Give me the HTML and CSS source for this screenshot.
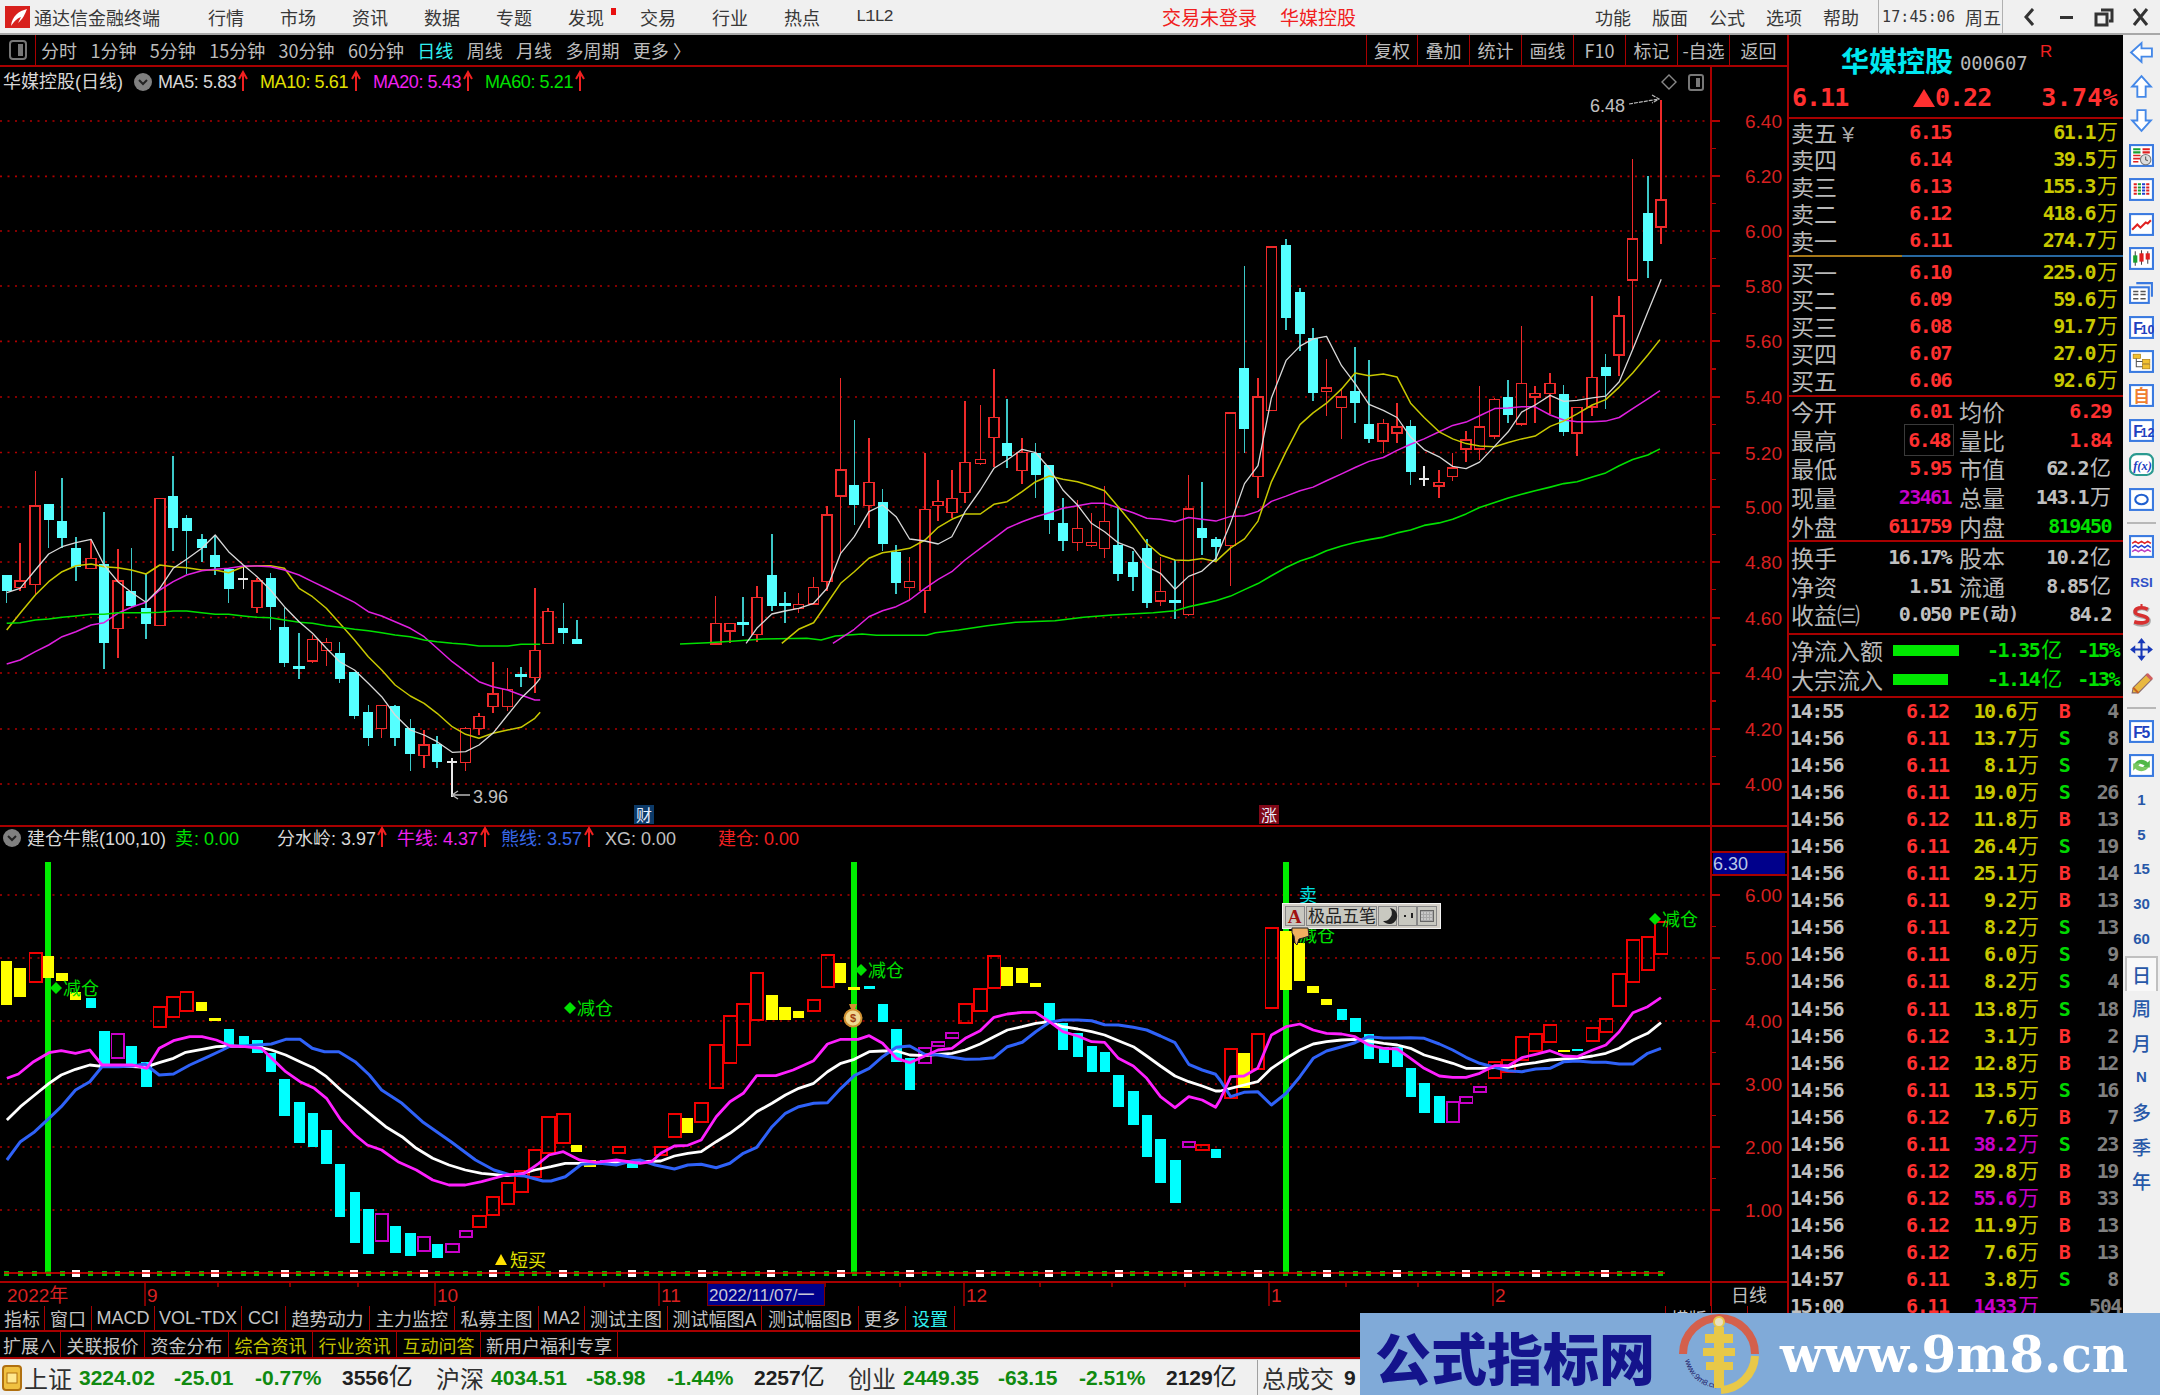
FILE: index.html
```html
<!DOCTYPE html>
<html lang="zh-CN">
<head>
<meta charset="utf-8">
<title>通达信金融终端</title>
<link rel="stylesheet" href="styles.css">
</head>
<body>
<div class="app">
  <header class="titlebar">
    <svg class="logo" viewBox="0 0 25 22"><rect width="25" height="22" fill="#d8201c"/><path d="M22 3C14 5 7 10 6 20 10 14 13 12 16 11L13 17C18 13 20 8 22 3Z" fill="#fff"/></svg>
    <span class="appname">通达信金融终端</span>
    <nav class="menu">
      <span>行情</span><span>市场</span><span>资讯</span><span>数据</span><span>专题</span><span class="dotted">发现</span><span>交易</span><span>行业</span><span>热点</span><span class="l12">L1L2</span>
    </nav>
    <span class="tb-red first">交易未登录</span>
    <span class="tb-red second">华媒控股</span>
    <nav class="menu right">
      <span>功能</span><span>版面</span><span>公式</span><span>选项</span><span>帮助</span>
    </nav>
    <div class="clock"><span class="time">17:45:06</span><span>周五</span></div>
    <div class="winbtns">
      <svg viewBox="0 0 37 30"><path d="M22 7 15 15l7 8" fill="none" stroke="#333" stroke-width="3"/></svg>
      <svg viewBox="0 0 37 30"><rect x="12" y="14" width="13" height="3" fill="#333"/></svg>
      <svg viewBox="0 0 37 30"><path d="M16 8h11v11h-3M11 12h11v11H11z" fill="none" stroke="#333" stroke-width="3"/></svg>
      <svg viewBox="0 0 37 30"><path d="M12 7l13 16M25 7 12 23" fill="none" stroke="#333" stroke-width="3"/></svg>
    </div>
  </header>

  <div class="body">
    <main class="left">
      <div class="periods">
        <div class="pbtn"><svg viewBox="0 0 18 20"><rect x="1" y="1" width="16" height="18" rx="3" fill="none" stroke="#777" stroke-width="2"/><rect x="9" y="4" width="5" height="12" fill="#777"/></svg></div>
        <div class="plist">
          <span>分时</span><span>1分钟</span><span>5分钟</span><span>15分钟</span><span>30分钟</span><span>60分钟</span><span class="on">日线</span><span>周线</span><span>月线</span><span>多周期</span><span>更多 〉</span>
        </div>
        <div class="pright">
          <span>复权</span><span>叠加</span><span>统计</span><span>画线</span><span>F10</span><span>标记</span><span>-自选</span><span>返回</span>
        </div>
      </div>
      <div class="chart"><svg id="chart" viewBox="0 67 1787 1239" width="1787" height="1239"></svg></div>
      <div class="tabs row1">
        <span>指标</span><span>窗口</span><span>MACD</span><span>VOL-TDX</span><span>CCI</span><span>趋势动力</span><span>主力监控</span><span>私募主图</span><span>MA2</span><span>测试主图</span><span>测试幅图A</span><span>测试幅图B</span><span>更多</span><span class="cy">设置</span>
        <span class="pushed">横版</span><span class="n1"></span>
      </div>
      <div class="tabs row2">
        <span>扩展∧</span><span>关联报价</span><span>资金分布</span><span class="ol">综合资讯</span><span class="ol">行业资讯</span><span class="ol">互动问答</span><span>新用户福利专享</span>
      </div>
    </main>

    <aside class="quote">
      <div class="q-title"><span class="q-name">华媒控股</span><span class="q-code">000607</span><span class="q-r">R</span></div>
      <div class="q-price"><span class="p1">6.11</span><span class="p2"><i class="tri"></i>0.22</span><span class="p3">3.74%</span></div>

      <div class="grid depth">
        <span class="lb">卖五<em class="yen">¥</em></span><span class="red n">6.15</span><span class="vol n span2">61.1<u>万</u></span>
        <span class="lb">卖四</span><span class="red n">6.14</span><span class="vol n span2">39.5<u>万</u></span>
        <span class="lb">卖三</span><span class="red n">6.13</span><span class="vol n span2">155.3<u>万</u></span>
        <span class="lb">卖二</span><span class="red n">6.12</span><span class="vol n span2">418.6<u>万</u></span>
        <span class="lb">卖一</span><span class="red n">6.11</span><span class="vol n span2">274.7<u>万</u></span>
      </div>
      <div class="midline"></div>
      <div class="grid depth buy">
        <span class="lb">买一</span><span class="red n">6.10</span><span class="vol n span2">225.0<u>万</u></span>
        <span class="lb">买二</span><span class="red n">6.09</span><span class="vol n span2">59.6<u>万</u></span>
        <span class="lb">买三</span><span class="red n">6.08</span><span class="vol n span2">91.7<u>万</u></span>
        <span class="lb">买四</span><span class="red n">6.07</span><span class="vol n span2">27.0<u>万</u></span>
        <span class="lb">买五</span><span class="red n">6.06</span><span class="vol n span2">92.6<u>万</u></span>
      </div>
      <div class="grid stats">
        <span class="lb">今开</span><span class="red n">6.01</span><span class="lb">均价</span><span class="red n">6.29</span>
        <span class="lb">最高</span><span class="red n"><b class="hi">6.48</b></span><span class="lb">量比</span><span class="red n">1.84</span>
        <span class="lb">最低</span><span class="red n">5.95</span><span class="lb">市值</span><span class="gr n">62.2<u>亿</u></span>
        <span class="lb">现量</span><span class="mg n">23461</span><span class="lb">总量</span><span class="gr n">143.1<u>万</u></span>
        <span class="lb">外盘</span><span class="red n">611759</span><span class="lb">内盘</span><span class="gn n">819450</span>
      </div>
      <div class="grid stats second">
        <span class="lb">换手</span><span class="gr n">16.17%</span><span class="lb">股本</span><span class="gr n">10.2<u>亿</u></span>
        <span class="lb">净资</span><span class="gr n">1.51</span><span class="lb">流通</span><span class="gr n">8.85<u>亿</u></span>
        <span class="lb">收益㈢</span><span class="gr n">0.050</span><span class="lb pe">PE(动)</span><span class="gr n">84.2</span>
      </div>
      <div class="flow">
        <span class="lb">净流入额</span><span class="barcell"><i class="bar b1"></i></span><span class="gn n">-1.35<u>亿</u></span><span class="gn n">-15%</span>
        <span class="lb">大宗流入</span><span class="barcell"><i class="bar b2"></i></span><span class="gn n">-1.14<u>亿</u></span><span class="gn n">-13%</span>
      </div>
      <div class="ticks" id="ticks">
        <span class="gr">14:55</span><span class="red">6.12</span><span class="vol">10.6<u>万</u></span><span class="b">B</span><span class="c">4</span>
        <span class="gr">14:56</span><span class="red">6.11</span><span class="vol">13.7<u>万</u></span><span class="s">S</span><span class="c">8</span>
        <span class="gr">14:56</span><span class="red">6.11</span><span class="vol">8.1<u>万</u></span><span class="s">S</span><span class="c">7</span>
        <span class="gr">14:56</span><span class="red">6.11</span><span class="vol">19.0<u>万</u></span><span class="s">S</span><span class="c">26</span>
        <span class="gr">14:56</span><span class="red">6.12</span><span class="vol">11.8<u>万</u></span><span class="b">B</span><span class="c">13</span>
        <span class="gr">14:56</span><span class="red">6.11</span><span class="vol">26.4<u>万</u></span><span class="s">S</span><span class="c">19</span>
        <span class="gr">14:56</span><span class="red">6.11</span><span class="vol">25.1<u>万</u></span><span class="b">B</span><span class="c">14</span>
        <span class="gr">14:56</span><span class="red">6.11</span><span class="vol">9.2<u>万</u></span><span class="b">B</span><span class="c">13</span>
        <span class="gr">14:56</span><span class="red">6.11</span><span class="vol">8.2<u>万</u></span><span class="s">S</span><span class="c">13</span>
        <span class="gr">14:56</span><span class="red">6.11</span><span class="vol">6.0<u>万</u></span><span class="s">S</span><span class="c">9</span>
        <span class="gr">14:56</span><span class="red">6.11</span><span class="vol">8.2<u>万</u></span><span class="s">S</span><span class="c">4</span>
        <span class="gr">14:56</span><span class="red">6.11</span><span class="vol">13.8<u>万</u></span><span class="s">S</span><span class="c">18</span>
        <span class="gr">14:56</span><span class="red">6.12</span><span class="vol">3.1<u>万</u></span><span class="b">B</span><span class="c">2</span>
        <span class="gr">14:56</span><span class="red">6.12</span><span class="vol">12.8<u>万</u></span><span class="b">B</span><span class="c">12</span>
        <span class="gr">14:56</span><span class="red">6.11</span><span class="vol">13.5<u>万</u></span><span class="s">S</span><span class="c">16</span>
        <span class="gr">14:56</span><span class="red">6.12</span><span class="vol">7.6<u>万</u></span><span class="b">B</span><span class="c">7</span>
        <span class="gr">14:56</span><span class="red">6.11</span><span class="mg">38.2<u>万</u></span><span class="s">S</span><span class="c">23</span>
        <span class="gr">14:56</span><span class="red">6.12</span><span class="vol">29.8<u>万</u></span><span class="b">B</span><span class="c">19</span>
        <span class="gr">14:56</span><span class="red">6.12</span><span class="mg">55.6<u>万</u></span><span class="b">B</span><span class="c">33</span>
        <span class="gr">14:56</span><span class="red">6.12</span><span class="vol">11.9<u>万</u></span><span class="b">B</span><span class="c">13</span>
        <span class="gr">14:56</span><span class="red">6.12</span><span class="vol">7.6<u>万</u></span><span class="b">B</span><span class="c">13</span>
        <span class="gr">14:57</span><span class="red">6.11</span><span class="vol">3.8<u>万</u></span><span class="s">S</span><span class="c">8</span>
        <span class="gr">15:00</span><span class="red">6.11</span><span class="mg">1433<u>万</u></span><span class="s"></span><span class="c">504</span>
      </div>
    </aside>

    <aside class="side">
      <svg class="ic" viewBox="0 0 24 24"><path d="M2 12 12 3v5h10v8H12v5z" class="ar"/></svg>
      <svg class="ic" viewBox="0 0 24 24"><path d="M12 2 21 12h-5v10H8V12H3z" class="ar"/></svg>
      <svg class="ic" viewBox="0 0 24 24"><path d="M12 22 21 12h-5V2H8v10H3z" class="ar"/></svg>
      <svg class="ic" viewBox="0 0 24 24"><rect x="1" y="2" width="22" height="20" class="bx"/><path d="M4 6h7M4 9h7" stroke="#18a030" stroke-width="2"/><path d="M13 6h7M13 9h7" stroke="#e02020" stroke-width="2"/><path d="M4 12h7M4 15h7M4 18h5" stroke="#e02020" stroke-width="1.5"/><circle cx="16" cy="16" r="5" fill="#ddd" stroke="#777"/><path d="M16 13v3l2 1" stroke="#555" fill="none"/></svg>
      <svg class="ic" viewBox="0 0 24 24"><rect x="1" y="2" width="22" height="20" class="bx"/><path d="M6 6v12" stroke="#e02020" stroke-width="3" stroke-dasharray="2 1"/><path d="M10 6v12" stroke="#18a030" stroke-width="3" stroke-dasharray="2 1"/><path d="M14 6v12" stroke="#2040d0" stroke-width="3" stroke-dasharray="2 1"/><path d="M18 6v12" stroke="#e02020" stroke-width="3" stroke-dasharray="2 1"/></svg>
      <svg class="ic" viewBox="0 0 24 24"><rect x="1" y="2" width="22" height="20" class="bx"/><path d="M3 17 8 12l3 3 5-5 2 1 3-3" fill="none" stroke="#e02020" stroke-width="2"/></svg>
      <svg class="ic" viewBox="0 0 24 24"><rect x="1" y="2" width="22" height="20" class="bx"/><path d="M6 5v14M12 4v14M18 5v12" stroke="#444"/><rect x="4" y="9" width="4" height="7" fill="#18a030"/><rect x="10" y="7" width="4" height="8" fill="#e02020"/><rect x="16" y="7" width="4" height="6" fill="#e02020"/></svg>
      <svg class="ic" viewBox="0 0 24 24"><path d="M7 3h15v13" fill="none" stroke="#3a7ae0" stroke-width="2"/><rect x="1" y="7" width="18" height="15" class="bx"/><path d="M4 11h5M11 11h5M4 14h5M11 14h5M4 18h5M11 18h5" stroke="#555" stroke-width="1.5"/></svg>
      <svg class="ic" viewBox="0 0 24 24"><rect x="1" y="2" width="22" height="20" class="bx"/><text x="4" y="18" class="ict">F</text><text x="11" y="18" class="ict sm">10</text></svg>
      <svg class="ic" viewBox="0 0 24 24"><rect x="1" y="2" width="22" height="20" class="bx"/><rect x="4" y="5" width="7" height="4" fill="#f0c030" stroke="#b08010" stroke-width=".7"/><rect x="13" y="10" width="7" height="4" fill="#f0c030" stroke="#b08010" stroke-width=".7"/><rect x="13" y="15" width="7" height="4" fill="#f0c030" stroke="#b08010" stroke-width=".7"/><path d="M7 9v8h6M7 12h6" stroke="#555" fill="none"/></svg>
      <svg class="ic" viewBox="0 0 24 24"><rect x="1" y="2" width="22" height="20" class="bx"/><text x="12" y="18" class="icz">自</text></svg>
      <svg class="ic" viewBox="0 0 24 24"><rect x="1" y="2" width="22" height="20" class="bx"/><text x="4" y="18" class="ict">F</text><text x="11" y="18" class="ict sm">12</text></svg>
      <svg class="ic" viewBox="0 0 24 24"><rect x="1" y="2" width="22" height="20" rx="6" fill="#fff" stroke="#2a9a90" stroke-width="2"/><text x="4" y="17" class="icf">f(x)</text></svg>
      <svg class="ic" viewBox="0 0 24 24"><rect x="1" y="2" width="22" height="20" class="bx"/><ellipse cx="12" cy="12" rx="6" ry="4.5" fill="none" stroke="#2060d0" stroke-width="2"/></svg>
      <i class="sep"></i>
      <svg class="ic" viewBox="0 0 24 24"><rect x="1" y="2" width="22" height="20" class="bx"/><path d="M3 9l3-2 3 2 3-2 3 2 3-2 3 2" fill="none" stroke="#e02020" stroke-width="1.4"/><path d="M3 13l3-2 3 2 3-2 3 2 3-2 3 2" fill="none" stroke="#2040d0" stroke-width="1.4"/><path d="M3 17l3-2 3 2 3-2 3 2 3-2 3 2" fill="none" stroke="#c040c0" stroke-width="1.4"/></svg>
      <svg class="ic" viewBox="0 0 24 24"><text x="12" y="18" class="rsi">RSI</text></svg>
      <svg class="ic" viewBox="0 0 24 24"><path d="M12 1v3" stroke="#d83030" stroke-width="2"/><path d="M19 7C12 3 5 6 6 10c1 4 13 2 13 7 0 4-8 5-14 2" fill="none" stroke="#aaa" stroke-width="4"/><path d="M18 6C12 3 5 5 6 9c1 4 12 2 12 7 0 3-7 4-13 2" fill="none" stroke="#d83030" stroke-width="3.4"/></svg>
      <svg class="ic" viewBox="0 0 24 24"><path d="M12 1l4 5h-3v5h5V8l5 4-5 4v-3h-5v5h3l-4 5-4-5h3v-5H6v3l-5-4 5-4v3h5V6H8z" fill="#1838b8"/></svg>
      <svg class="ic" viewBox="0 0 24 24"><path d="M4 16 17 3l5 5L9 21H3z" fill="#e8b840" stroke="#866" stroke-width="1"/><path d="M4 16l5 5" stroke="#c86020" stroke-width="2"/><path d="M17 3l5 5" stroke="#d06060" stroke-width="3"/></svg>
      <i class="sep"></i>
      <svg class="ic" viewBox="0 0 24 24"><rect x="1" y="2" width="22" height="20" class="bx"/><text x="4" y="18" class="ict">F</text><text x="12" y="18" class="ict">5</text></svg>
      <svg class="ic" viewBox="0 0 24 24"><rect x="1" y="2" width="22" height="20" class="bx"/><path d="M5 11c2-5 9-6 13-2l2-2v7h-7l2-2c-3-2-6-2-10-1z" fill="#50b848"/><path d="M19 13c-2 5-9 6-13 2l-2 2v-7h7l-2 2c3 2 6 2 10 1z" fill="#78c860"/></svg>
      <span class="st">1</span><span class="st">5</span><span class="st">15</span><span class="st">30</span><span class="st">60</span>
      <span class="st cj sel">日</span><span class="st cj">周</span><span class="st cj">月</span><span class="st">N</span><span class="st cj">多</span><span class="st cj">季</span><span class="st cj">年</span>
    </aside>
  </div>

  <footer class="status">
    <svg class="sicon" viewBox="0 0 20 26"><rect x="1" y="1" width="18" height="24" rx="3" fill="#f0c040" stroke="#b07010" stroke-width="2"/><rect x="5" y="8" width="10" height="10" fill="#ffe890" stroke="#b07010"/></svg>
    <span class="sl">上证</span><span class="sn a">3224.02</span><span class="sn b">-25.01</span><span class="sn c">-0.77%</span><span class="sv">3556<u>亿</u></span>
    <span class="sl">沪深</span><span class="sn a">4034.51</span><span class="sn b">-58.98</span><span class="sn c">-1.44%</span><span class="sv">2257<u>亿</u></span>
    <span class="sl">创业</span><span class="sn a">2449.35</span><span class="sn b">-63.15</span><span class="sn c">-2.51%</span><span class="sv">2129<u>亿</u></span>
    <span class="sl total">总成交</span><span class="sv">9</span>
  </footer>

  <div class="watermark">
    <span class="wm-cn">公式指标网</span>
    <svg class="wm-logo" viewBox="0 0 80 80">
      <path d="M4 40A36 36 0 0 1 76 40" fill="none" stroke="#d4604c" stroke-width="8"/>
      <path d="M76 42A36 36 0 0 1 42 76" fill="none" stroke="#e8c848" stroke-width="8"/>
      <path id="wmarc" d="M6 46A35 35 0 0 0 36 74" fill="none"/>
      <text class="wm-small"><textPath href="#wmarc">www.9m8.cn</textPath></text>
      <circle cx="40" cy="8" r="5" fill="#e8e0c0" stroke="#e8c848" stroke-width="2"/>
      <path d="M35 13h10v7h9v9h-9v5h11v8h-11v6h9v8h-9v18H35V56h-8v-8h8v-6H24v-8h11v-5h-9v-9h9z" fill="#e8c848"/>
    </svg>
    <span class="wm-en">www.9m8.cn</span>
  </div>
</div>
<script src="chart.js"></script>
</body>
</html>
```

FILE: styles.css
```css
* { box-sizing: border-box; }
html, body { margin: 0; padding: 0; background: #000; }
body { font-family: "Noto Sans CJK SC", "Liberation Sans", sans-serif; }
u { text-decoration: none; }
em, i { font-style: normal; }
.app { position: relative; width: 2160px; height: 1395px; overflow: hidden; background: #000; }

/* title bar */
.titlebar { display: flex; align-items: center; height: 35px; background: #f0f0f0; border-bottom: 2px solid #a8a8a8; color: #383838; font-size: 18px; }
.logo { width: 25px; height: 22px; margin-left: 5px; flex: none; }
.appname { margin-left: 4px; width: 132px; white-space: nowrap; }
.menu { display: flex; align-items: center; gap: 36px; margin-left: 42px; }
.menu span { position: relative; width: 36px; white-space: nowrap; }
.menu .l12 { font: 17px "Liberation Mono", monospace; width: 40px; letter-spacing: -1px; }
.menu .dotted::after { content: ""; position: absolute; left: 43px; top: 4px; width: 5px; height: 7px; background: #e81010; }
.menu.right { gap: 21px; margin-left: 239px; }
.tb-red { color: #f02020; font-size: 19px; white-space: nowrap; }
.tb-red.first { margin-left: 266px; }
.tb-red.second { margin-left: 23px; }
.clock { display: flex; align-items: center; height: 33px; margin-left: 19px; padding-left: 3px; width: 125px; border: solid #b0b0b0; border-width: 0 1px; }
.clock .time { font: 15px "DejaVu Sans Mono", monospace; margin-right: 10px; letter-spacing: .1px; }
.winbtns { display: flex; margin-left: 8px; }
.winbtns svg { width: 37px; height: 30px; }

/* layout */
.body { display: flex; height: 1324px; }
.left { width: 1787px; flex: none; display: flex; flex-direction: column; }

/* period toolbar */
.periods { display: flex; height: 32px; border-bottom: 2px solid #a80000; color: #bcbcbc; font-size: 18px; }
.pbtn { width: 36px; flex: none; display: flex; align-items: center; justify-content: center; border-right: 1px solid #a80000; }
.pbtn svg { width: 18px; height: 20px; }
.plist { display: flex; align-items: center; gap: 13.4px; padding-left: 5px; white-space: nowrap; }
.plist .on { color: #30f0f0; }
.pright { display: flex; margin-left: auto; }
.pright span { display: flex; align-items: center; justify-content: center; width: 52px; border-left: 1px solid #a80000; white-space: nowrap; }
.pright span:first-child { width: 51px; }
.pright span:last-child { width: 58px; }

/* chart */
.chart { height: 1239px; flex: none; }
.chart svg { display: block; }
.tx { font: 18px "Liberation Sans", "Noto Sans CJK SC", sans-serif; }
.lg { letter-spacing: -.4px; }
.grey { fill: #c0c0c0; }
.t-white { fill: #d8d8d8; }
.t-yellow { fill: #e0e000; }
.t-mag { fill: #f020f0; }
.t-green { fill: #00e000; }
.t-red { fill: #f02020; }
.t-blue { fill: #3868e8; }
.t-axis { font: 19px "Liberation Sans", sans-serif; fill: #d82020; }
.t-date { font: 19px "Liberation Sans", "Noto Sans CJK SC", sans-serif; fill: #d82020; }
.t-datebox { font: 17px "Liberation Sans", "Noto Sans CJK SC", sans-serif; fill: #c8c8d8; }
.t-cy { fill: #00e0e0; }
.t-ann { font: 18px "Noto Sans CJK SC", sans-serif; }
.t-badge { font: 16px "Noto Sans CJK SC", sans-serif; fill: #e8f0ff; }
.t-ime { font: 17px "Noto Sans CJK SC", sans-serif; fill: #222; }
.t-imea { font: bold 19px "Liberation Serif", serif; fill: #a01010; }
.t-bag { font: bold 11px "Liberation Sans", sans-serif; fill: #a04010; }
.t-cur { font: 18px "Liberation Sans", sans-serif; fill: #b8c8e8; }

/* bottom tabs */
.tabs { display: flex; color: #c4c4c4; font-size: 18px; white-space: nowrap; border-bottom: 2px solid #a80000; background: #000; }
.tabs.row1 { height: 26px; }
.tabs.row2 { height: 27px; }
.tabs span { display: flex; align-items: center; justify-content: center; border-right: 1px solid #a80000; font-family: "Liberation Sans", "Noto Sans CJK SC", sans-serif; flex: none; }
.row1 span:nth-child(1) { width: 45px; }
.row1 span:nth-child(2) { width: 47px; }
.row1 span:nth-child(3) { width: 63px; }
.row1 span:nth-child(4) { width: 87px; }
.row1 span:nth-child(5) { width: 44px; }
.row1 span:nth-child(6) { width: 84px; }
.row1 span:nth-child(7) { width: 85px; }
.row1 span:nth-child(8) { width: 84px; }
.row1 span:nth-child(9) { width: 46px; }
.row1 span:nth-child(10) { width: 83px; }
.row1 span:nth-child(11) { width: 94px; }
.row1 span:nth-child(12) { width: 97px; }
.row1 span:nth-child(13) { width: 47px; }
.row1 span:nth-child(14) { width: 49px; }
.row2 span { width: 84px; }
.row2 span:first-child { width: 61px; }
.row2 span:last-child { width: 137px; }
.tabs .cy { color: #30f0f0; }
.tabs .ol { color: #c0c000; }
.tabs .pushed { margin-left: auto; border-left: 1px solid #a80000; width: 47px; }
.tabs .n1 { width: 36px; margin-right: 39px; }

/* quote panel */
.quote { width: 336px; flex: none; border-left: 2px solid #a80000; overflow: hidden; color: #c0c0c0; font-size: 24px; }
.q-title { display: flex; height: 49px; align-items: center; padding-left: 52px; }
.q-name { font-size: 28px; font-weight: 700; color: #00e8f0; white-space: nowrap; width: 119px; }
.q-code { font: 19px "DejaVu Sans Mono", monospace; color: #b8b8b8; margin-top: 6px; width: 76px; letter-spacing: -.2px; }
.q-r { font: 17px "Liberation Sans", sans-serif; color: #f02020; margin: -16px 0 0 4px; }
.q-price { display: grid; grid-template-columns: 64px 1fr auto; height: 35px; padding: 0 5px 0 3px; border-bottom: 2px solid #a80000; font: 700 25px/27px "DejaVu Sans Mono", monospace; letter-spacing: -1px; color: #ff3030; white-space: nowrap; }
.p2 { padding-left: 57px; display: flex; align-items: center; height: 27px; }
.tri { width: 0; height: 0; border: solid transparent; border-width: 0 11px 18px; border-bottom-color: #ff3030; }
.p3 { letter-spacing: .3px; }

.grid { display: grid; grid-template-columns: 60px 100px 8px 60px 100px; padding: 0 4px 0 2px; }
.lb { font-size: 23px; line-height: 27px; color: #b8b8b8; white-space: nowrap; }
.n { font: 700 20px/27px "DejaVu Sans Mono", "Noto Sans CJK SC", monospace; text-align: right; white-space: nowrap; letter-spacing: -1.6px; }
.n u, .ticks u { font: 400 21px/0 "Noto Sans CJK SC", sans-serif; letter-spacing: 0; margin-left: 2px; }
.red { color: #ff3030; }
.vol { color: #c8c800; }
.gr { color: #c0c0c0; }
.mg { color: #c800c8; }
.gn { color: #00e000; }
.yen { font: 22px/0 "Liberation Sans", sans-serif; margin-left: 5px; color: #aaa; }

.depth { grid-template-columns: 60px 100px 167px; grid-auto-rows: 27px; height: 136px; align-content: start; }
.depth .span2 { grid-column: 3; }
.depth.buy { height: 140px; padding-top: 2px; border-bottom: 2px solid #a80000; }
.midline { height: 2px; background: linear-gradient(90deg, #a87818 0 113px, #2868a0 113px); }

.stats { grid-template-columns: 60px 100px 60px 100px; column-gap: 0; grid-auto-rows: 28.7px; height: 145px; border-bottom: 2px solid #a80000; padding-top: 0; }
.stats.second { height: 93px; padding-top: 1px; }
.stats .lb { line-height: 28.7px; }
.stats .n { line-height: 28.7px; }
.stats .lb:nth-child(4n+3) { margin-left: 8px; }
.hi { font-weight: 700; border: 1px solid #3a3a3a; padding: 3px 3px 3px 3px; margin-right: -3px; }
.pe { font: 700 18px/28.7px "DejaVu Sans Mono", "Noto Sans CJK SC", monospace; letter-spacing: -.3px; }

.flow { display: grid; grid-template-columns: 102px 94px 71px 61px; grid-auto-rows: 28.9px; height: 63px; padding: 1px 4px 0 2px; border-bottom: 2px solid #a80000; }
.flow .lb { line-height: 28.9px; }
.flow .n { line-height: 28.9px; }
.barcell { display: flex; align-items: center; }
.bar { display: block; height: 11px; background: #00e800; }
.b1 { width: 66px; }
.b2 { width: 55px; }

.ticks { display: grid; grid-template-columns: 116px 50px 83px 50px 29px; grid-auto-rows: 27.05px; padding-left: 1px; font: 700 20px/27px "DejaVu Sans Mono", "Noto Sans CJK SC", monospace; letter-spacing: -1.4px; white-space: nowrap; }
.ticks .vol, .ticks .mg { text-align: right; }
.ticks .b, .ticks .s { text-align: center; }
.ticks .b { color: #ff3030; }
.ticks .s { color: #00d800; }
.ticks .c { color: #808080; text-align: right; }

/* side toolbar */
.side { width: 37px; flex: none; background: #f0f0f0; display: flex; flex-direction: column; align-items: center; padding-top: 0; color: #2858a8; }
.ic { width: 25px; height: 25px; margin: 4.7px 0; flex: none; }
.ar { fill: #fff; stroke: #4488e8; stroke-width: 1.8; }
.bx { fill: #fff; stroke: #3a7ae0; stroke-width: 2; }
.ict { font: 700 15px "Liberation Sans", sans-serif; fill: #2040c0; }
.ict.sm { font-size: 12px; }
.icz { font: 700 16px "Noto Sans CJK SC", sans-serif; fill: #f08030; text-anchor: middle; }
.icf { font: italic 700 12px "Liberation Serif", serif; fill: #2040c0; }
.rsi { font: 700 13px "Liberation Sans", sans-serif; fill: #3050c8; text-anchor: middle; }
.sep { display: block; width: 29px; height: 2px; margin: 5.5px 0; background: #b8b8b8; flex: none; }
.st { height: 34.7px; line-height: 34.7px; width: 33px; text-align: center; font: 700 15px/34.7px "Liberation Sans", sans-serif; flex: none; }
.st.cj { font: 500 19px/34.7px "Noto Sans CJK SC", sans-serif; }
.st.sel { background: #f8f8f8; border: solid #c0c0c0; border-width: 2px 2px 0; }

/* status bar */
.status { display: flex; align-items: center; height: 36px; background: #f0f0f0; color: #222; white-space: nowrap; border-top: 1px solid #d8d8d8; }
.sicon { width: 20px; height: 26px; margin-left: 2px; margin-right: 2px; flex: none; }
.sl { width: 55px; font-size: 24px; color: #303030; flex: none; }
.sn { flex: none; font: 700 21px "Liberation Sans", sans-serif; color: #108a10; }
.sn.a { width: 95px; }
.sn.b { width: 81px; }
.sn.c { width: 87px; }
.sv { flex: none; width: 94px; font: 700 21px "Liberation Sans", sans-serif; color: #202020; }
.sv u { font: 400 24px/0 "Noto Sans CJK SC", sans-serif; }
.sl.total { width: 87px; padding-left: 4px; margin-left: -3px; border-left: 1px solid #a0a0a0; }

/* watermark */
.watermark { position: absolute; left: 1360px; top: 1313px; right: 0; bottom: 0; display: flex; align-items: center; background: #80aad8; }
.wm-cn { margin-left: 15px; width: 291px; font-size: 56px; font-weight: 900; line-height: 1; color: #14148c; white-space: nowrap; margin-top: 3px; }
.wm-logo { width: 80px; height: 80px; margin-left: 13px; flex: none; }
.wm-small { font: 8px "Liberation Sans", sans-serif; fill: #24246c; }
.wm-en { margin-left: 21px; font: 700 50px "DejaVu Serif", serif; color: #fff; white-space: nowrap; }
```

FILE: chart.js
```js
(function () {
  var NS = 'http://www.w3.org/2000/svg';
  var svg = document.getElementById('chart');
  function el(tag, attrs, text, parent) {
    var n = document.createElementNS(NS, tag);
    for (var k in attrs) n.setAttribute(k, attrs[k]);
    if (text != null) n.textContent = text;
    (parent || svg).appendChild(n);
    return n;
  }
  function rect(x, y, w, h, fill, stroke, sw) {
    var a = { x: x, y: y, width: w, height: h, fill: fill, 'shape-rendering': 'crispEdges' };
    if (stroke) { a.stroke = stroke; a['stroke-width'] = sw || 2; }
    return el('rect', a);
  }
  function txt(x, y, s, cls, anchor) {
    var a = { x: x, y: y, 'class': cls };
    if (anchor) a['text-anchor'] = anchor;
    return el('text', a, s);
  }
  var DARK = '#a80000';
  function hline(x1, x2, y, c, w) { el('line', { x1: x1, x2: x2, y1: y, y2: y, stroke: c || DARK, 'stroke-width': w || 2 }); }
  function vline(x, y1, y2, c, w) { el('line', { x1: x, x2: x, y1: y1, y2: y2, stroke: c || DARK, 'stroke-width': w || 2 }); }

  var Z7 = [function (d) { return d / 2.24; }, function (d) { return 400 + d / 3; }];
  var Z8 = [function (d) { return 680 + d / 2.8; }, function (d) { return 340 + d / 3; }];
  var Z9 = [function (d) { return 1160 + d / 2.45; }, function (d) { return 80 + d / 2.8; }];
  var S10 = [function (d) { return d / 2.45; }, function (d) { return 820 + d / 3; }];
  var S11 = [function (d) { return 640 + d / 2.613; }, function (d) { return 820 + d / 3; }];
  var S12 = [function (d) { return 1220 + d / 2.703; }, function (d) { return 820 + d / 3; }];

  /* grid and axes */
  var mainAxis = [['6.40', 121], ['6.20', 176.4], ['6.00', 231], ['5.80', 286], ['5.60', 341.4], ['5.40', 397], ['5.20', 452.5], ['5.00', 507], ['4.80', 562], ['4.60', 617.5], ['4.40', 673], ['4.20', 729], ['4.00', 784]];
  var subAxis = [['6.00', 895], ['5.00', 958], ['4.00', 1021], ['3.00', 1084], ['2.00', 1147], ['1.00', 1210]];
  function grid(list) {
    list.forEach(function (p, i) {
      el('line', { x1: 0, x2: 1711, y1: p[1], y2: p[1], stroke: '#b00000', 'stroke-width': 1.6, 'stroke-dasharray': '2 5.5' });
      rect(1711, p[1] - 1, 9, 2, '#b00000');
      if (i < list.length - 1) rect(1711, (p[1] + list[i + 1][1]) / 2 - 1, 5, 1.5, '#b00000');
      txt(1745, p[1] + 7, p[0], 't-axis');
    });
  }
  grid(mainAxis);
  grid(subAxis);
  vline(1711, 67, 1306);
  hline(0, 1787, 826);
  hline(0, 1787, 1282);

  /* candles: [dx, type, wickTop, bodyTop, bodyBottom, wickBottom] */
  var CY = '#55ffff', RD = '#ee2a2a';
  function candle(m, d) {
    var x = m[0](d[0]), wt = m[1](d[2]), bt = m[1](d[3]), bb = m[1](d[4]), wb = m[1](d[5]);
    var t = d[1];
    if (t === 'c') {
      rect(x - 0.75, wt, 1.5, wb - wt, '#3cc8c8');
      if (bb - bt < 2) rect(x - 6, bt - 1.5, 12, 3, CY);
      else rect(x - 5, bt, 10, bb - bt, CY);
    } else if (t === 'w') {
      rect(x - 0.75, wt, 1.5, wb - wt, '#e8e8e8');
      rect(x - 5, bt - 1, 10, 2, '#e8e8e8');
    } else {
      rect(x - 0.75, wt, 1.5, bt - wt, RD);
      rect(x - 0.75, bb, 1.5, wb - bb, RD);
      rect(x - 5, bt, 10, bb - bt, '#000', RD, 1.6);
    }
  }
  [
    [15,'c',525,525,573,608],[45,'r',430,543,563,572],[79,'r',213,318,553,583],[109,'c',313,313,361,443],[139,'c',235,363,415,445],
    [170,'c',412,443,500,543],[204,'r',420,476,505,508],[233,'c',335,493,730,808],[264,'r',448,543,685,775],[294,'c',443,573,618,620],
    [327,'c',520,625,672,717],[358,'r',295,295,677,677],[388,'c',168,287,384,452],[418,'c',345,353,393,523],[452,'c',403,417,443,485],
    [482,'c',405,466,502,525],[512,'c',507,507,568,610],[545,'w',497,537,537,568],[576,'r',535,543,622,640],[606,'c',520,534,622,690],
    [637,'c',625,682,790,800],[670,'c',700,803,803,838],[700,'r',705,719,783,790],[731,'r',715,727,752,798],[761,'c',727,759,838,848],
    [794,'c',815,817,947,956],[825,'c',915,935,1014,1037],[855,'r',915,917,986,1015],[885,'c',915,917,1014,1037],[919,'c',957,985,1063,1113],
    [950,'r',990,1035,1067,1103],[979,'c',1007,1032,1087,1103],[1013,'w',1075,1085,1085,1190],[1043,'r',980,985,1088,1113],[1073,'r',940,950,985,1005],
    [1104,'r',785,882,919,938],[1137,'r',803,868,919,933],[1167,'c',800,827,827,860],[1198,'r',565,752,832,880],
    [1228,'r',625,634,731,731],[1262,'c',610,683,698,731],[1292,'c',660,718,731,731]
  ].forEach(function (d) { candle(Z7, d); });
  [
    [100,'r',768,850,912,912],[140,'r',850,850,873,910],[177,'c',772,850,850,888],[215,'r',737,773,883,905],[257,'c',583,705,798,812],
    [294,'c',755,793,793,848],[332,'r',758,793,806,820],[374,'r',710,742,792,792],[412,'r',498,525,725,752],[450,'r',115,390,468,640],
    [488,'c',240,435,496,555],[529,'r',295,427,496,565],[567,'c',448,485,613,633],[605,'c',615,635,730,762],[643,'r',650,725,742,780],
    [686,'r',340,508,752,820],[723,'r',420,485,496,542],[761,'r',390,476,518,533],[798,'r',182,368,458,490],[841,'r',196,359,370,375],
    [879,'r',88,233,292,380],[916,'c',178,308,348,384],[958,'r',295,337,391,433],[996,'c',308,340,406,473],[1034,'c',376,376,541,582],
    [1072,'c',475,548,604,632],[1113,'r',480,566,607,632],[1152,'r',520,607,617,622],[1189,'r',438,544,626,654],[1227,'c',505,615,703,722],
    [1269,'c',632,665,712,753],[1307,'c',597,624,790,803],[1345,'r',650,755,783,798],[1386,'c',660,785,785,838]
  ].forEach(function (d) { candle(Z8, d); });
  [
    [70,'r',1105,1202,1497,1500],[103,'c',1125,1255,1283,1330],[137,'c',1280,1285,1308,1350],[173,'r',933,933,1303,1418],[207,'c',520,806,976,1045],
    [240,'r',835,887,1110,1170],[273,'r',467,467,925,925],[309,'c',445,461,665,700],[343,'c',583,593,711,758],[375,'c',693,723,876,898],
    [408,'r',780,862,872,940],[445,'r',865,887,917,1005],[478,'c',748,870,905,960],[512,'c',785,962,1005,1015],[547,'r',948,962,1010,1045],
    [581,'r',903,971,988,1015],[614,'c',953,970,1098,1133],[647,'w',1080,1118,1118,1137],[684,'r',1092,1127,1136,1170],[717,'r',1045,1087,1110,1123],
    [750,'r',983,1008,1033,1070],[783,'r',857,971,1033,1065],[820,'r',890,895,997,1005],[853,'c',840,887,938,960],[886,'r',690,850,963,968],
    [919,'r',857,878,888,960],[956,'r',820,850,878,935],[989,'c',853,878,985,998],[1022,'r',917,917,988,1052],[1059,'r',605,833,916,940],
    [1092,'c',768,803,830,922],[1125,'r',605,660,770,830],[1158,'r',222,445,560,755],[1195,'c',268,373,506,553],[1228,'r',55,336,412,460]
  ].forEach(function (d) { candle(Z9, d); });

  function poly(parts, color, w) {
    var pts = [];
    parts.forEach(function (part) {
      var m = part[0];
      part[1].forEach(function (p) { pts.push(m[0](p[0]).toFixed(1) + ',' + m[1](p[1]).toFixed(1)); });
    });
    el('polyline', { points: pts.join(' '), fill: 'none', stroke: color, 'stroke-width': w, 'stroke-linejoin': 'round' });
  }
  var W = '#d8d8d8', Y = '#c8c800', M = '#e020e0', G = '#00e000';
  /* moving averages, left segment */
  poly([[Z7, [[15,690],[45,640],[79,585],[109,545],[139,515],[170,497],[204,492],[233,500],[264,503],[294,510],[327,522],[358,495],[388,500],[418,503],[452,510],[482,510],[512,518],[545,500],[576,497],[606,497],[637,505],[670,565],[700,590],[731,625],[761,670],[794,720],[825,770],[855,810],[885,855],[919,888],[950,910],[979,940],[1013,980],[1043,1003],[1073,1015],[1104,1000],[1137,990],[1167,982],[1198,955],[1210,937]]]], Y, 1.5);
  poly([[Z7, [[15,792],[45,780],[79,755],[109,735],[139,710],[170,695],[204,675],[233,668],[264,640],[294,622],[327,607],[358,570],[388,545],[418,525],[452,512],[482,508],[512,505],[545,498],[576,498],[606,500],[637,510],[670,525],[700,545],[731,565],[761,585],[794,607],[825,635],[855,648],[885,665],[919,685],[950,710],[979,745],[1013,785],[1043,815],[1073,845],[1104,860],[1137,870],[1167,885],[1198,900],[1210,900]]]], M, 1.5);
  poly([[Z7, [[15,670],[45,668],[79,660],[109,657],[139,652],[170,648],[204,643],[233,643],[264,638],[294,638],[327,638],[358,637],[388,633],[418,633],[452,638],[482,643],[512,643],[545,648],[576,652],[606,653],[637,660],[670,667],[700,670],[731,677],[761,682],[794,688],[825,692],[855,698],[885,705],[919,710],[950,720],[979,725],[1013,730],[1043,733],[1073,738],[1104,738],[1137,738],[1167,733],[1210,733]]]], G, 1.6);
  poly([[Z7, [[15,578],[45,565],[79,510],[109,462],[139,440],[170,428],[204,418],[233,495],[264,545],[294,577],[327,607],[358,565],[388,505],[418,478],[452,445],[482,405],[512,455],[545,495],[576,530],[606,570],[637,620],[670,665],[700,700],[731,745],[761,785],[794,810],[825,850],[855,890],[885,945],[919,990],[950,1005],[979,1025],[1013,1057],[1043,1055],[1073,1035],[1104,1000],[1137,945],[1167,895],[1198,855],[1210,835]]]], W, 1.3);
  /* moving averages, right segment */
  poly([[Z8, [[0,912],[78,908],[155,903],[233,897],[355,895],[395,900],[435,888],[510,882],[550,886],[690,886],[715,878],[780,870],[860,857],[940,847],[1050,842],[1130,832],[1210,825],[1325,818],[1386,812]]],
        [Z9, [[70,1475],[103,1467],[137,1458],[173,1445],[207,1427],[240,1410],[273,1388],[309,1365],[343,1347],[375,1335],[408,1318],[445,1305],[478,1295],[512,1287],[547,1280],[581,1268],[614,1260],[647,1247],[684,1240],[717,1230],[750,1215],[783,1197],[820,1183],[853,1170],[886,1160],[919,1150],[956,1140],[989,1130],[1022,1125],[1059,1112],[1092,1100],[1125,1080],[1158,1063],[1195,1050],[1225,1033]]]], G, 1.6);
  poly([[Z8, [[428,910],[488,868],[529,830],[567,812],[605,800],[643,780],[686,745],[723,718],[761,695],[798,660],[841,625],[879,595],[916,565],[958,545],[996,530],[1034,518],[1072,505],[1113,497],[1152,490],[1189,490],[1227,503],[1269,518],[1307,535],[1345,538],[1386,545]]],
        [Z9, [[70,1225],[103,1230],[137,1235],[173,1222],[207,1220],[240,1208],[273,1180],[309,1165],[343,1150],[375,1140],[408,1122],[445,1103],[478,1085],[512,1068],[547,1057],[581,1037],[614,1020],[647,1005],[684,985],[717,967],[750,958],[783,940],[820,920],[853,918],[886,915],[919,915],[956,938],[989,952],[1022,957],[1059,957],[1092,955],[1125,945],[1158,920],[1195,893],[1225,870]]]], M, 1.5);
  poly([[Z8, [[285,910],[332,868],[374,848],[412,790],[450,730],[488,695],[529,655],[567,638],[605,632],[643,625],[686,600],[723,562],[761,538],[798,522],[841,522],[879,493],[916,485],[958,455],[996,425],[1034,408],[1072,418],[1113,425],[1152,438],[1189,452],[1227,500],[1269,555],[1307,610],[1345,645],[1386,660]]],
        [Z9, [[70,1345],[103,1340],[137,1348],[173,1310],[207,1285],[240,1235],[273,1125],[309,1040],[343,965],[375,932],[408,905],[445,865],[478,820],[512,828],[547,823],[581,832],[614,905],[647,945],[684,985],[717,1005],[750,1018],[783,1025],[820,1027],[853,1015],[886,1005],[919,997],[956,970],[989,955],[1022,935],[1059,910],[1092,895],[1125,860],[1158,820],[1195,770],[1225,727]]]], Y, 1.5);
  poly([[Z8, [[185,910],[215,865],[257,822],[294,813],[332,805],[374,790],[412,745],[450,640],[488,590],[529,515],[567,495],[605,530],[643,597],[686,603],[723,612],[761,590],[798,515],[841,450],[879,385],[916,360],[958,328],[996,338],[1034,385],[1072,450],[1113,495],[1152,550],[1189,575],[1227,608],[1269,625],[1307,680],[1345,700],[1386,748]]],
        [Z9, [[70,1390],[103,1375],[137,1340],[173,1240],[207,1130],[240,1080],[273,890],[309,785],[343,745],[375,725],[408,718],[445,800],[478,850],[512,908],[547,925],[581,945],[614,1000],[647,1035],[684,1055],[717,1082],[750,1088],[783,1070],[820,1025],[853,985],[886,930],[919,910],[956,883],[989,900],[1022,897],[1059,890],[1092,885],[1125,845],[1158,755],[1195,650],[1228,558]]]], W, 1.3);

  /* peak and trough annotations */
  txt(1590, 112, '6.48', 'tx grey');
  el('path', { d: 'M1629 104 1659 99M1652 95l7 4-7 4', fill: 'none', stroke: '#b8b8b8', 'stroke-width': 1.2, 'stroke-dasharray': '4 1' });
  el('path', { d: 'M452 795h18M452 795l6-4M452 795l6 4', fill: 'none', stroke: '#b8b8b8', 'stroke-width': 1.4 });
  txt(473, 803, '3.96', 'tx grey');

  /* event badges */
  rect(634, 805, 20, 19, '#0c3a68');
  txt(644, 821, '财', 't-badge', 'middle');
  rect(1259, 805, 20, 19, '#800818');
  txt(1269, 821, '涨', 't-badge', 'middle');

  /* legends */
  function arrow(x, y) { el('path', { d: 'M' + x + ' ' + (y + 9) + 'V' + (y - 9) + 'M' + (x - 4) + ' ' + (y - 3) + 'L' + x + ' ' + (y - 10) + 'L' + (x + 4) + ' ' + (y - 3), fill: 'none', stroke: '#f02020', 'stroke-width': 2 }); }
  function chevron(x, y) {
    el('circle', { cx: x, cy: y, r: 9, fill: '#808080' });
    el('path', { d: 'M' + (x - 4) + ' ' + (y - 2) + 'l4 4 4-4', fill: 'none', stroke: '#222', 'stroke-width': 2 });
  }
  txt(3, 88, '华媒控股(日线)', 'tx t-white');
  chevron(143, 82);
  txt(158, 88, 'MA5: 5.83', 'tx lg t-white'); arrow(243, 82);
  txt(260, 88, 'MA10: 5.61', 'tx lg t-yellow'); arrow(356, 82);
  txt(373, 88, 'MA20: 5.43', 'tx lg t-mag'); arrow(468, 82);
  txt(485, 88, 'MA60: 5.21', 'tx lg t-green'); arrow(580, 82);
  el('path', { d: 'M1669 75l7 7-7 7-7-7z', fill: 'none', stroke: '#888', 'stroke-width': 1.4 });
  el('rect', { x: 1689, y: 75, width: 14, height: 15, rx: 2, fill: 'none', stroke: '#777', 'stroke-width': 2 });
  rect(1696, 78, 4, 9, '#777');

  chevron(12, 838);
  txt(27, 845, '建仓牛熊(100,10)', 'tx t-white');
  txt(175, 845, '卖', 'tx t-green');
  txt(194, 845, ': 0.00', 'tx t-green');
  txt(277, 845, '分水岭: 3.97', 'tx t-white'); arrow(382, 838);
  txt(397, 845, '牛线: 4.37', 'tx t-mag'); arrow(485, 838);
  txt(501, 845, '熊线: 3.57', 'tx t-blue'); arrow(589, 838);
  txt(605, 845, 'XG: 0.00', 'tx grey');
  txt(718, 845, '建仓: 0.00', 'tx t-red');

  /* sub chart: vertical signals */
  [47.8, 853.5, 1285.5].forEach(function (x) { rect(x - 3, 862, 6, 411, '#00ec00'); });

  /* sub chart bars: [dx, type, top, bottom] */
  function bar(m, d) {
    var x = m[0](d[0]), t = m[1](d[2]), b = m[1](d[3]);
    if (d[1] === 'c') rect(x - 5, t, 10.5, b - t, '#00ffff');
    else if (d[1] === 'y') rect(x - 6, t, 11.5, b - t, '#ffff00');
    else rect(x - 6, t, 12.5, b - t, 'none', d[1] === 'r' ? '#f00000' : '#c800c8', 1.7);
  }
  [
    [17,'y',422,555],[49,'y',445,532],[87,'r',400,487],[119,'y',408,473],[152,'y',458,483],[185,'y',517,541],[222,'c',533,565],
    [255,'c',633,745],[288,'m',643,713],[321,'c',678,745],[358,'c',725,802],[391,'r',562,622],[424,'r',530,590],[457,'r',517,572],[494,'y',547,573],[527,'y',593,604],
    [560,'c',628,680],[597,'c',647,685],[630,'c',660,698],[663,'c',698,757],[696,'c',778,888],[733,'c',845,968],[766,'c',880,982],[799,'c',930,1032],
    [832,'c',1033,1190],[869,'c',1115,1270],[902,'c',1168,1303],[935,'m',1183,1262],[968,'c',1218,1298],[1005,'c',1240,1307],[1038,'m',1250,1292],[1071,'c',1273,1315],
    [1108,'m',1273,1297],[1141,'m',1232,1252],[1174,'r',1188,1220],[1207,'r',1130,1184],[1244,'r',1088,1153],[1277,'r',1052,1117],[1310,'r',990,1072],[1343,'r',890,1000],
    [1380,'r',882,968],[1413,'y',975,997],[1446,'y',1020,1042],[1483,'c',1020,1035],[1516,'r',980,1000],[1549,'c',1020,1045]
  ].forEach(function (d) { bar(S10, d); });
  [
    [54,'r',980,1005],[90,'r',882,950],[125,'y',893,938],[160,'r',850,905],[199,'r',675,805],[235,'r',589,730],[270,'r',553,676],[305,'r',459,600],[345,'y',525,600],[380,'y',561,600],
    [415,'y',574,595],[454,'r',540,572],[490,'r',404,500],[525,'y',430,488],[560,'y',502,510],[599,'c',497,506],[634,'c',552,605],[670,'c',628,726],[705,'c',715,811],[744,'m',684,730],
    [779,'m',665,677],[815,'m',638,653],[850,'r',553,608],[889,'r',508,572],[925,'r',409,505],[960,'y',440,497],[999,'y',443,488],[1034,'y',488,501],[1070,'c',548,605],[1105,'c',610,690],
    [1144,'c',640,712],[1180,'c',678,757],[1214,'c',695,757],[1250,'c',764,862],[1289,'c',813,915],[1324,'c',885,1010],[1360,'c',957,1090],[1398,'c',1020,1150],[1434,'m',967,982],[1469,'r',976,990],[1504,'c',988,1015]
  ].forEach(function (d) { bar(S11, d); });
  [
    [29,'r',688,833],[65,'y',700,805],[102,'r',643,748],[139,'r',323,563],[179,'y',332,510],[216,'y',370,483],[252,'y',497,520],[288,'y',538,555],[329,'c',566,600],[365,'c',593,636],
    [402,'c',643,717],[442,'c',680,730],[479,'c',680,740],[515,'c',745,830],[552,'c',790,878],[593,'c',827,910],[629,'m',845,905],[665,'m',832,850],[702,'m',800,815],[742,'r',725,775],
    [779,'r',720,755],[816,'r',652,720],[853,'r',643,693],[892,'r',616,667],[930,'y',691,695],[965,'c',688,692],[1007,'r',625,662],[1043,'r',598,635],[1079,'r',463,559],[1116,'r',360,487],[1156,'r',351,451],[1192,'r',305,401]
  ].forEach(function (d) { bar(S12, d); });

  /* sub chart lines */
  poly([[S10, [[17,900],[50,860],[85,825],[120,790],[150,765],[185,748],[220,735],[255,740],[290,740],[325,740],[355,742],[390,728],[425,715],[455,697],[495,688],[530,680],[565,678],[600,680],[630,680],[665,690],[700,705],[735,725],[770,745],[800,770],[835,810],[870,845],[905,880],[945,920],[985,950],[1020,985],[1060,1015],[1100,1035],[1140,1050],[1180,1060],[1240,1067],[1275,1062],[1310,1050],[1350,1040],[1385,1030],[1420,1030],[1460,1027],[1500,1027],[1568,1025]]],
        [S11, [[54,1023],[90,1008],[125,1000],[160,995],[199,965],[235,940],[270,910],[305,875],[345,850],[380,825],[415,805],[454,790],[490,755],[525,730],[560,718],[599,695],[634,693],[670,693],[705,705],[744,707],[779,703],[815,700],[850,690],[889,672],[925,650],[960,630],[999,620],[1034,610],[1070,605],[1105,620],[1144,627],[1180,635],[1214,645],[1250,662],[1289,680],[1324,708],[1360,738],[1398,768],[1434,785],[1469,798],[1504,813]]],
        [S12, [[0,813],[29,805],[65,795],[102,785],[139,745],[179,715],[216,690],[252,672],[288,665],[329,660],[365,658],[402,663],[442,670],[479,675],[515,685],[552,705],[593,718],[629,730],[665,745],[702,745],[742,743],[779,742],[816,733],[853,728],[892,720],[930,717],[965,715],[1007,708],[1043,700],[1079,685],[1116,660],[1156,640],[1192,608]]]], '#ffffff', 2.8);
  poly([[S10, [[17,1020],[50,965],[85,935],[120,895],[150,860],[185,810],[220,785],[250,740],[290,740],[325,738],[355,732],[390,765],[425,762],[465,735],[510,710],[545,690],[565,678],[600,678],[630,675],[665,672],[700,658],[735,658],[765,685],[795,695],[830,695],[870,725],[905,765],[935,810],[985,850],[1035,905],[1105,965],[1165,1020],[1210,1050],[1250,1065],[1285,1068],[1330,1083],[1350,1083],[1385,1070],[1425,1033],[1470,1030],[1510,1035],[1550,1022],[1568,1020]]],
        [S11, [[40,1035],[90,1047],[125,1035],[160,1033],[199,1043],[235,1030],[270,1000],[305,982],[345,920],[380,880],[415,860],[454,850],[490,848],[525,805],[560,767],[599,745],[634,710],[670,682],[705,678],[744,703],[779,705],[815,712],[850,718],[889,717],[925,713],[960,680],[999,667],[1034,635],[1070,607],[1105,600],[1144,600],[1180,602],[1214,614],[1250,615],[1289,622],[1324,630],[1360,648],[1398,668],[1434,733],[1469,750],[1504,763]]],
        [S12, [[0,780],[29,830],[65,817],[102,815],[139,855],[179,820],[216,770],[252,715],[288,693],[329,680],[365,668],[402,650],[442,654],[479,654],[515,653],[552,655],[593,672],[629,690],[665,712],[702,730],[742,742],[779,752],[816,755],[853,747],[892,745],[930,725],[965,723],[1007,727],[1043,727],[1079,732],[1116,732],[1156,700],[1192,685]]]], '#2f62f8', 3);
  poly([[S10, [[17,775],[45,762],[80,727],[120,698],[150,692],[185,700],[220,690],[250,735],[290,735],[325,735],[360,745],[390,685],[425,662],[465,650],[495,650],[530,660],[565,678],[600,680],[640,685],[670,720],[700,755],[735,785],[770,805],[800,835],[835,900],[870,945],[900,975],[935,990],[975,1025],[1020,1050],[1060,1080],[1100,1095],[1140,1095],[1180,1085],[1240,1065],[1285,1060],[1320,1030],[1345,1005],[1380,995],[1420,1020],[1460,1027],[1510,1020],[1568,1030]]],
        [S11, [[30,1025],[54,1000],[90,978],[125,976],[160,960],[199,890],[235,845],[270,820],[305,767],[355,767],[400,750],[454,722],[490,672],[525,658],[570,658],[599,647],[634,670],[670,715],[705,728],[744,708],[779,690],[815,685],[850,655],[889,632],[925,592],[960,582],[999,577],[1034,577],[1070,605],[1105,635],[1144,648],[1180,665],[1214,667],[1250,715],[1289,738],[1324,775],[1360,830],[1398,863],[1434,830],[1469,840],[1504,862]]],
        [S12, [[0,840],[29,770],[65,768],[102,745],[139,645],[179,620],[216,612],[252,630],[288,640],[329,642],[365,650],[402,675],[442,685],[479,687],[515,715],[552,745],[593,768],[629,772],[665,772],[702,760],[742,737],[779,737],[816,713],[853,703],[892,692],[930,708],[965,710],[1007,690],[1043,675],[1079,635],[1116,578],[1156,560],[1192,533]]]], '#ff20ff', 2.8);

  /* bottom signal strip */
  for (var i = 0; i < 120; i++) {
    var mx = 6.7 + 13.9 * i;
    if (i % 5 === 0 && i > 0) rect(mx - 4, 1269.5, 8, 7, '#ffffff');
    else rect(mx - 2.5, 1270.5, 5, 5, '#00c000');
  }
  hline(4, 1665, 1273, '#e80000', 1.5);

  /* signal annotations */
  function diamond(x, y) { el('path', { d: 'M' + x + ' ' + (y - 6) + 'l6 6-6 6-6-6z', fill: '#00e000' }); }
  [[56, 988], [570, 1008], [861, 970], [1655, 919]].forEach(function (p) {
    diamond(p[0], p[1]);
    txt(p[0] + 7, p[1] + 7, '减仓', 't-ann t-green');
  });
  txt(1299, 942, '减仓', 't-ann t-green');
  txt(1299, 902, '卖', 't-ann t-cy');
  el('path', { d: 'M501 1254l6 11h-12z', fill: '#ffe000' });
  txt(510, 1267, '短买', 't-ann t-yellow');

  /* money bag */
  el('circle', { cx: 853, cy: 1018, r: 8.5, fill: '#f0d890', stroke: '#d09030', 'stroke-width': 2 });
  el('path', { d: 'M849 1004h8l-2 5h-4z', fill: '#d09030' });
  txt(853, 1022, '$', 't-bag', 'middle');

  /* input method bar */
  rect(1282, 903, 158, 25, '#d4d0c8', '#f4f4f4', 1);
  [[1285, 19], [1306, 70], [1378, 18], [1398, 18], [1417, 19]].forEach(function (b) {
    rect(b[0], 906, b[1], 19, '#c8c8c0', '#888', 1);
  });
  txt(1294.5, 923, 'A', 't-imea', 'middle');
  txt(1308, 922, '极品五笔', 't-ime');
  el('path', { d: 'M1390 908a8 8 0 1 1-7 13 8 8 0 0 0 7-13z', fill: '#222' });
  rect(1404, 915, 2, 2, '#222');
  rect(1411, 913, 2, 5, '#222');
  rect(1420, 910, 13, 11, '#a8a8a8', '#666', 1);
  el('path', { d: 'M1421 913h11M1421 916h11M1421 919h11', stroke: '#e8e8e8', 'stroke-dasharray': '2 1' });
  /* hand cursor */
  el('path', { d: 'M1292 928h16l1 8-6 2-4 1-2 6-2-2-1-7-2-3z', fill: '#f0b060', stroke: '#222', 'stroke-width': 1 });

  /* cursor price box */
  hline(1711, 1787, 852);
  hline(1711, 1787, 875);
  rect(1713, 853, 72, 21, '#00008b');
  txt(1713, 870, '6.30', 't-cur');

  /* date axis */
  [145, 435, 659, 964, 1269, 1493].forEach(function (x) { vline(x, 1282, 1306, '#a80000', 1.5); });
  [218, 290, 358, 604, 720, 825, 900, 1040, 1112, 1185, 1346, 1418].forEach(function (x) { vline(x, 1282, 1287, '#a80000', 1.5); });
  txt(7, 1302, '2022年', 't-date');
  txt(147, 1302, '9', 't-date');
  txt(437, 1302, '10', 't-date');
  txt(661, 1302, '11', 't-date');
  rect(707, 1283, 117, 22, '#00008b', '#800000', 1);
  txt(709, 1301, '2022/11/07/一', 't-datebox');
  txt(966, 1302, '12', 't-date');
  txt(1271, 1302, '1', 't-date');
  txt(1495, 1302, '2', 't-date');
  txt(1731, 1302, '日线', 'tx grey');
})();
```
